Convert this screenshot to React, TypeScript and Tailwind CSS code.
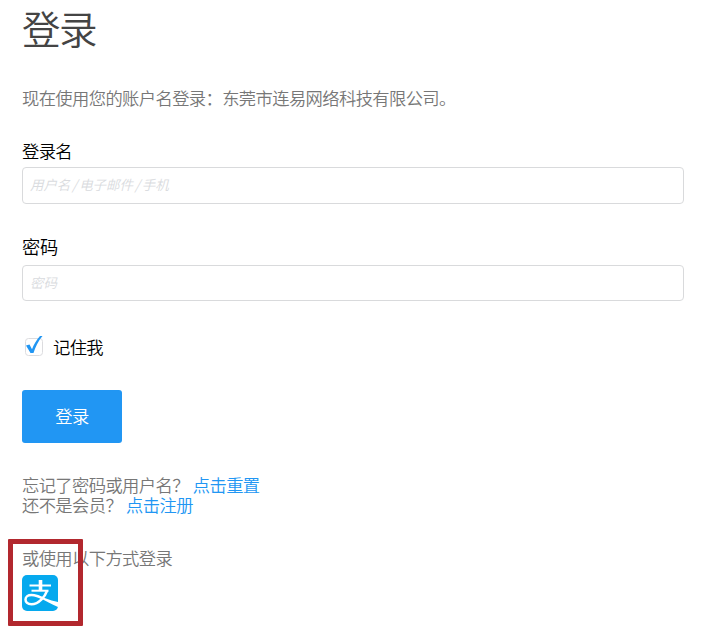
import { useState } from "react";

interface FieldProps {
  id: string;
  label: string;
  placeholder: string;
  type?: string;
  className: string;
}

function Field({ id, label, placeholder, type = "text", className }: FieldProps) {
  return (
    <input
      id={id}
      type={type}
      aria-label={label}
      placeholder={placeholder}
      className={`block w-[662px] rounded-[4px] border border-[#d9dadc] bg-white px-[7px] pb-[3px] text-[13.5px] font-[350] tracking-[-0.1px] [word-spacing:-1px] text-[#333] outline-none placeholder:italic placeholder:text-[#d9dbde] ${className}`}
    />
  );
}

function AlipayIcon() {
  return (
    <svg viewBox="0 0 36 36" className="block size-9" aria-hidden="true">
      <rect width="36" height="36" rx="5" fill="#06a9ee" />
      <g fill="none" stroke="#fff" strokeLinecap="butt">
        <path d="M7.5 10.5H29" strokeWidth="2" />
        <path d="M18.5 5V16" strokeWidth="3.6" />
        <path d="M9.5 15.7H26.5" strokeWidth="2" />
        <path d="M25.2 15.5C23 21.5 17 29.2 9.5 29.2C5.5 29.2 3.5 27 3.5 24.5C3.5 21.7 6 20 9.5 20C14 20 17.5 21.7 21 23.8" strokeWidth="2.5" />
      </g>
      <path d="M15 19.8C20 22 27 25.2 36 27V32C29 29 24 26 18 23Z" fill="#fff" />
    </svg>
  );
}

export default function App() {
  const [remember, setRemember] = useState(true);

  return (
    <main className="flex h-[636px] w-[720px] flex-col overflow-hidden bg-white pl-[22px] font-['Noto_Sans_CJK_SC',sans-serif] text-[17.3px] font-[350] leading-5 tracking-[-0.6px] text-[#777]">
      <h1 className="mt-[2px] text-[38.5px] leading-[50px] tracking-[-1.5px] text-[#444]">登录</h1>
      <p className="mt-9">现在使用您的账户名登录：东莞市连易网络科技有限公司。</p>

      <label htmlFor="username" className="mt-[33px] text-black">登录名</label>
      <Field id="username" label="登录名" placeholder="用户名 / 电子邮件 / 手机" className="mt-[6px] h-[37px]" />

      <label htmlFor="password" className="mt-[32px] text-[18.3px] tracking-[-0.3px] text-black">密码</label>
      <Field id="password" label="密码" placeholder="密码" type="password" className="mt-[9px] h-9" />

      <label className="mt-[34px] flex h-[24px] w-fit items-center text-black">
        <input
          type="checkbox"
          className="sr-only"
          checked={remember}
          onChange={(e) => setRemember(e.target.checked)}
        />
        <svg viewBox="0 0 22 24" className="mr-[9px] h-6 w-[22px]" aria-hidden="true">
          <rect x="3.5" y="3.5" width="17" height="17" rx="3" fill="#fff" stroke="#dcdcdf" />
          {remember && <path d="M4 10.5L7.5 9.5L10 14.2C12 9.2 14.5 5 18 1H20.5C16 6.5 13.5 11.5 11.5 18H8.5Z" fill="#2196f3" />}
        </svg>
        记住我
      </label>

      <button className="mt-[31px] h-[53px] w-[100px] shrink-0 rounded-[3px] bg-[#2196f3] pb-[2px] text-white">登录</button>

      <div className="mt-[32px]">
        <p>
          忘记了密码或用户名？<a href="#reset" className="ml-[4px] text-[#2196f3]">点击重置</a>
        </p>
        <p>
          还不是会员？<a href="#register" className="ml-[4px] text-[#2196f3]">点击注册</a>
        </p>
      </div>

      <div className="relative mt-[33px]">
        <p>或使用以下方式登录</p>
        <a href="#alipay" aria-label="支付宝" className="mt-[7px] block w-9">
          <AlipayIcon />
        </a>
        {/* Highlight frame around the third-party login */}
        <div className="pointer-events-none absolute -left-[14px] -top-[9px] h-[87px] w-[75px] rounded-[1px] border-[5px] border-[#b2282e]" />
      </div>
    </main>
  );
}
